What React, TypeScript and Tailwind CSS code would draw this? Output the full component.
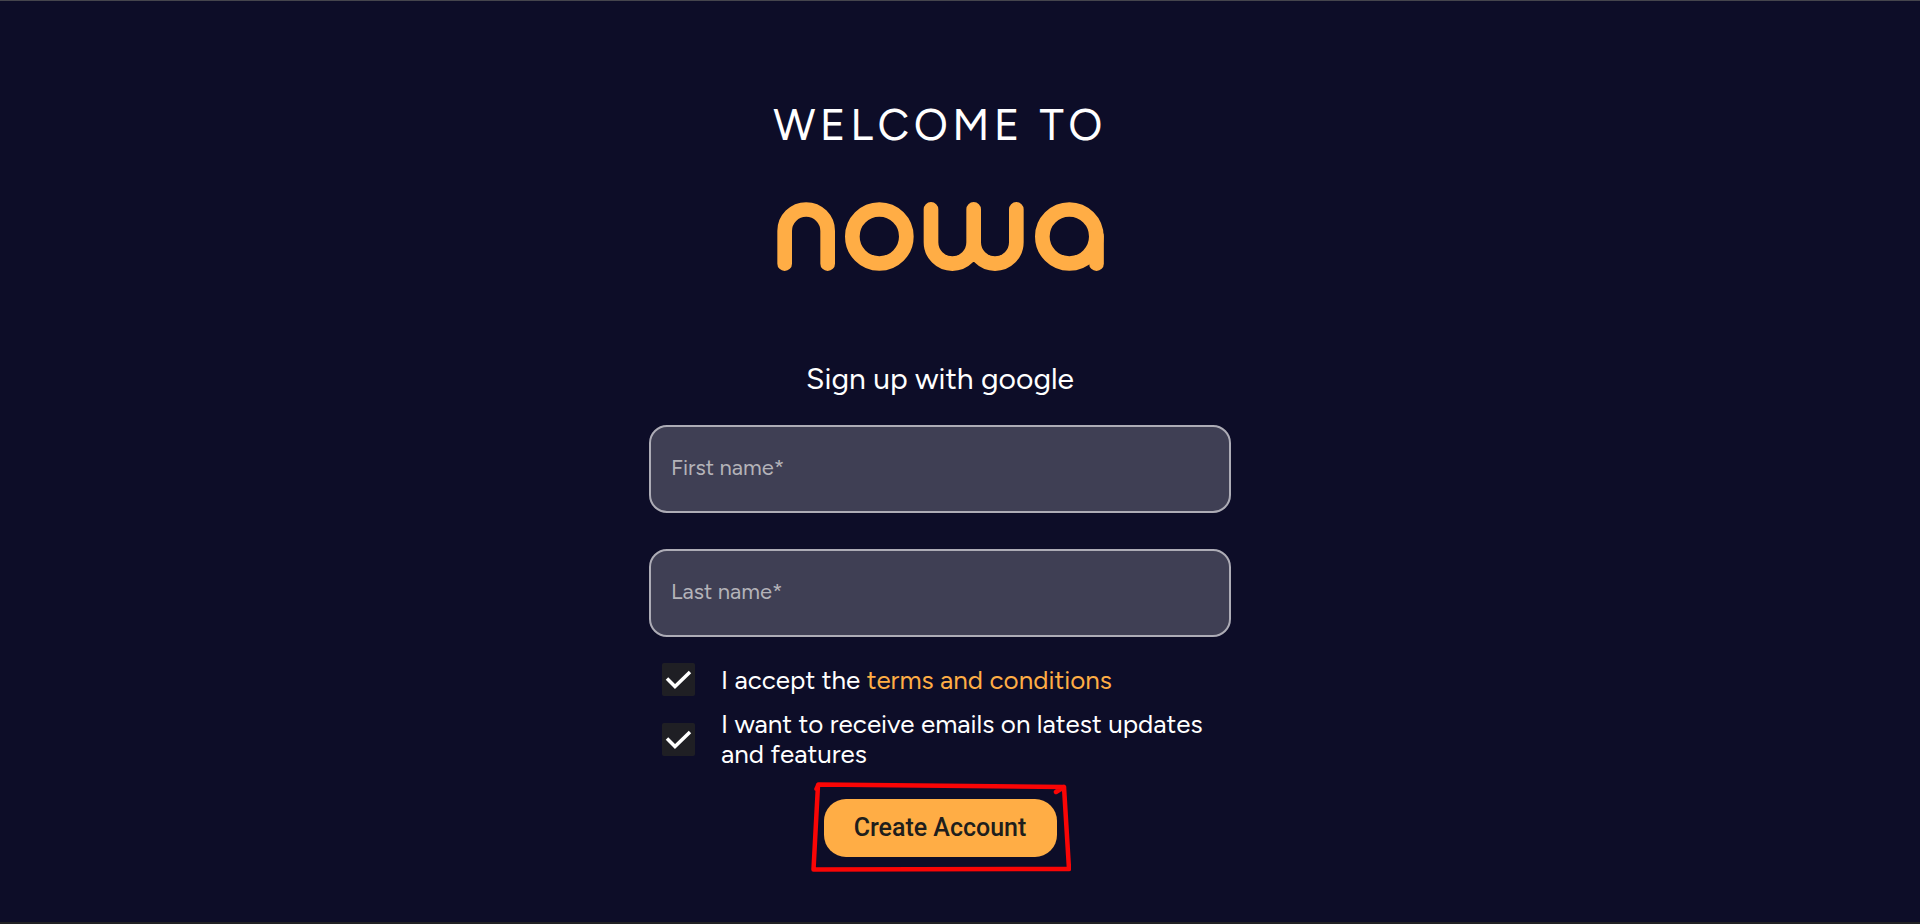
import { useState } from "react";
import type { ReactNode } from "react";

function NowaLogo() {
  return (
    <svg
      role="img"
      aria-label="nowa"
      viewBox="0 0 981 207"
      className="h-[69px] w-[327px]"
      fill="none"
      stroke="#ffad45"
      strokeWidth="44"
      strokeLinecap="round"
    >
      <path d="M23 185V87a64.5 64.5 0 0 1 129 0V185" />
      <circle cx="307" cy="103.500" r="81" />
      <path d="M462 22V121a64 64 0 0 0 128 0V22M590 121a64 64 0 0 0 128 0V22" />
      <circle cx="877" cy="103.500" r="81" />
      <path d="M958.500 103.500V185" />
    </svg>
  );
}

function Field({ id, label }: { id: string; label: string }) {
  return (
    <input
      id={id}
      type="text"
      aria-label={label}
      placeholder={label}
      className="block h-[88px] w-full rounded-[18px] border-2 border-[#adacb6] bg-[#3f3f54] px-5 pb-1 text-[22px] text-white outline-none placeholder:text-[#b4b3b9]"
    />
  );
}

function CheckRow({ id, children }: { id: string; children: ReactNode }) {
  const [checked, setChecked] = useState(true);
  return (
    <div className="flex w-full items-center gap-[26px] pl-[13px]">
      <span className="grid shrink-0">
        <input
          id={id}
          type="checkbox"
          checked={checked}
          onChange={(e) => setChecked(e.target.checked)}
          className="col-start-1 row-start-1 size-[33px] appearance-none rounded-[2px] bg-[#1f1f24]"
        />
        {checked && (
          <svg
            aria-hidden="true"
            viewBox="0 0 33 33"
            className="pointer-events-none col-start-1 row-start-1 size-[33px]"
            fill="none"
            stroke="white"
            strokeWidth="3.500"
          >
            <path d="M5 15.500 13 23.500 28 9" />
          </svg>
        )}
      </span>
      <label htmlFor={id} className="text-[26px] leading-[30px]">
        {children}
      </label>
    </div>
  );
}

export default function App() {
  return (
    <main className="flex min-h-screen flex-col items-center border-t border-b-2 border-t-[#45454d] border-b-[#212124] bg-[#0d0d28] pt-[98px] pr-10 pb-12 font-[Figtree,Lato,sans-serif] text-white">
      <h1 className="text-[44px] leading-[52px] tracking-widest">WELCOME TO</h1>
      <div className="mt-[51px]">
        <NowaLogo />
      </div>
      <form className="mt-[88px] flex w-full max-w-[582px] flex-col items-center" onSubmit={(e) => e.preventDefault()}>
        <h2 className="text-[30px] leading-10">Sign up with google</h2>
        <div className="mt-[26px] flex w-full flex-col gap-9">
          <Field id="first-name" label="First name*" />
          <Field id="last-name" label="Last name*" />
        </div>
        <div className="mt-[26px] flex w-full flex-col gap-[13px]">
          <CheckRow id="terms">
            I accept the{" "}
            <a href="#terms" className="text-[#ffad45]">
              terms and conditions
            </a>
          </CheckRow>
          <CheckRow id="emails">I want to receive emails on latest updates and features</CheckRow>
        </div>
        <div className="relative mt-[30px]">
          <button
            type="submit"
            className="h-[58px] w-[233px] rounded-[22px] bg-[#ffad45] font-[Roboto,sans-serif] text-[25px] font-medium text-[#201e1c]"
          >
            Create Account
          </button>
          <svg
            aria-hidden="true"
            viewBox="0 0 260 92"
            className="pointer-events-none absolute -top-[18px] -left-[13px] h-[92px] w-[260px]"
            fill="none"
            stroke="#fa0505"
            strokeWidth="4.500"
            strokeLinecap="round"
            strokeLinejoin="round"
          >
            <path d="M5.500 8 7.500 3.500 253 6 258 88 2.500 88.500 7 4M253 6 245 11" />
          </svg>
        </div>
      </form>
    </main>
  );
}
